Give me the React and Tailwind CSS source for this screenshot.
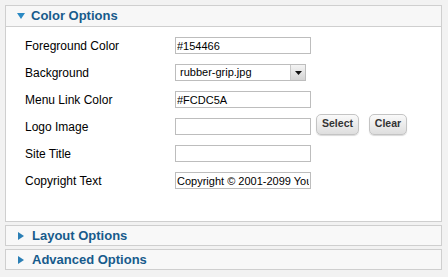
import React from 'react'

const labelFont = { fontFamily: '"Liberation Sans", Arial, sans-serif' }

function Field({ value = '' }) {
  return (
    <input
      readOnly
      value={value}
      className="h-[17px] w-[136px] border border-[#bdbdbd] bg-white px-[1px] text-[11px] leading-[15px] text-black outline-none"
      style={labelFont}
    />
  )
}

function Btn({ children, w }) {
  return (
    <button
      className={`${w} mb-[5px] h-[21px] shrink-0 rounded-[5px] border border-[#c4c4c4] bg-gradient-to-b from-[#fafafa] to-[#dedede] text-[10.5px] font-bold text-[#333] shadow-[0_1px_1px_rgba(0,0,0,0.15)]`}
      style={labelFont}
    >
      {children}
    </button>
  )
}

function Row({ label, children }) {
  return (
    <div className="flex h-[27px] items-start">
      <div className="flex h-[17px] w-[150px] items-center text-[12px] text-black" style={labelFont}>
        {label}
      </div>
      <div className="flex h-[17px] items-center">{children}</div>
    </div>
  )
}

function Collapsed({ title }) {
  return (
    <div className="flex h-[21px] items-center border border-[#cfcfcf] bg-[#f8f8f8] pl-[12px]">
      <svg width="6" height="8" viewBox="0 0 6 8" className="mr-[8px]">
        <path d="M0 0 L6 4 L0 8 Z" fill="#2b7fb5" />
      </svg>
      <span className="text-[13px] font-bold text-[#175b8c]" style={labelFont}>{title}</span>
    </div>
  )
}

export default function App() {
  return (
    <div className="h-[277px] w-[448px] bg-[#f2f2f2] pl-[5px] pr-[6px] pt-[5px]">
      {/* Color Options (open) */}
      <div className="border border-[#cfcfcf] bg-white">
        <div className="flex h-[21px] items-center border-b border-[#cfcfcf] bg-[#f7f7f7] pl-[11px]">
          <svg width="8" height="6" viewBox="0 0 8 6" className="mr-[6px]">
            <path d="M0 0 L8 0 L4 6 Z" fill="#2b8ac4" />
          </svg>
          <span className="text-[13px] font-bold text-[#175b8c]" style={labelFont}>Color Options</span>
        </div>
        <div className="pl-[19px] pt-[10px] pb-[22px]">
          <Row label="Foreground Color"><Field value="#154466" /></Row>
          <Row label="Background">
            <div
              className="flex h-[17px] w-[131px] items-center border border-[#bdbdbd] bg-white text-[11px] text-black"
              style={labelFont}
            >
              <span className="flex-1 pl-[4px] leading-[15px]">rubber-grip.jpg</span>
              <span className="flex h-full w-[15px] items-center justify-center border-l border-[#c8c8c8] bg-gradient-to-b from-[#f4f4f4] to-[#d4d4d4]">
                <svg width="7" height="4" viewBox="0 0 7 4">
                  <path d="M0 0 L7 0 L3.5 4 Z" fill="#111" />
                </svg>
              </span>
            </div>
          </Row>
          <Row label="Menu Link Color"><Field value="#FCDC5A" /></Row>
          <Row label="Logo Image">
            <Field />
            <div className="ml-[5px] flex gap-[10px]">
              <Btn w="w-[43px]">Select</Btn>
              <Btn w="w-[38px]">Clear</Btn>
            </div>
          </Row>
          <Row label="Site Title"><Field /></Row>
          <Row label="Copyright Text"><Field value="Copyright © 2001-2099 Your Company" /></Row>
        </div>
      </div>
      <div className="mt-[3px] flex flex-col gap-[3px]">
        <Collapsed title="Layout Options" />
        <Collapsed title="Advanced Options" />
      </div>
    </div>
  )
}
